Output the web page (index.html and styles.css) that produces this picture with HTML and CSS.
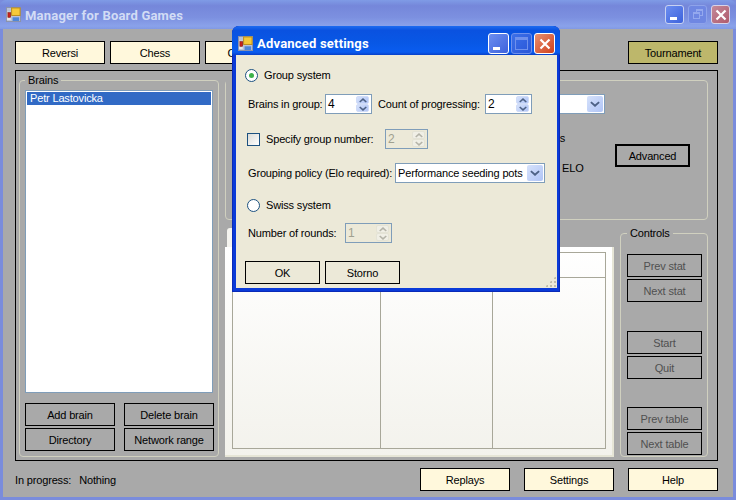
FILE: index.html
```html
<!DOCTYPE html>
<html lang="en">

<head>
    <meta charset="UTF-8">
    <meta name="viewport" content="width=device-width, initial-scale=1.0">
    <title>Manager for Board Games</title>
    <link rel="stylesheet" href="styles.css">
</head>

<body>

    <svg class="defs" width="0" height="0">
        <symbol id="app-icon" viewBox="0 0 16 16">
            <rect x="0.5" y="0.5" width="15" height="15" fill="#b9c2d8" stroke="#8c93a8"/>
            <rect x="1" y="5" width="4" height="9" fill="#e8e8e8"/>
            <rect x="2" y="6" width="3" height="5" fill="#c8221c" stroke="#7a1010" stroke-width="0.6"/>
            <rect x="6" y="1" width="9" height="8" fill="#f6c93a" stroke="#b98a18"/>
            <rect x="7" y="11" width="7" height="4" fill="#4f86d8"/>
        </symbol>
        <symbol id="arrow-up" viewBox="0 0 9 5">
            <path d="M0.8 4.2 L4.5 0.9 L8.2 4.2" fill="none" stroke="currentColor" stroke-width="1.7"/>
        </symbol>
        <symbol id="arrow-down" viewBox="0 0 9 5">
            <path d="M0.8 0.8 L4.5 4.1 L8.2 0.8" fill="none" stroke="currentColor" stroke-width="1.7"/>
        </symbol>
        <symbol id="close-x" viewBox="0 0 12 12">
            <path d="M1.5 1.5 L10.5 10.5 M10.5 1.5 L1.5 10.5" fill="none" stroke="#fff" stroke-width="2.2"/>
        </symbol>
    </svg>

    <div class="window">
        <div class="titlebar">
            <svg class="app-icon"><use href="#app-icon"/></svg>
            <span class="title-text">Manager for Board Games</span>
            <div class="caption-btns">
                <div class="caption-btn"><span class="min-bar"></span></div>
                <div class="caption-btn faded"><span class="restore-back"></span><span class="restore-front"></span></div>
                <div class="caption-btn close"><svg class="close-x"><use href="#close-x"/></svg></div>
            </div>
        </div>

        <div class="content">
            <div class="game-row">
                <div class="games">
                    <button class="btn cream">Reversi</button>
                    <button class="btn cream">Chess</button>
                    <button class="btn cream">Checkers</button>
                </div>
                <button class="btn khaki">Tournament</button>
            </div>

            <div class="frame">
                <fieldset class="group brains">
                    <legend>Brains</legend>
                    <div class="listbox">
                        <div class="list-item">Petr Lastovicka</div>
                    </div>
                    <div class="brain-btns">
                        <button class="btn">Add brain</button>
                        <button class="btn">Delete brain</button>
                        <button class="btn">Directory</button>
                        <button class="btn">Network range</button>
                    </div>
                </fieldset>

                <div class="right-col">
                    <fieldset class="group tourney">
                        <legend>Tournament</legend>
                        <div class="tourney-combo">
                            <div class="combo wide-combo">
                                <span class="combo-text"></span>
                                <span class="combo-arrow"><svg class="arrow"><use href="#arrow-down"/></svg></span>
                            </div>
                        </div>
                        <div class="tourney-info">
                            <div class="info-text">
                                <span class="info-groups">Groups</span>
                                <span>ELO</span>
                            </div>
                            <button class="btn advanced">Advanced</button>
                        </div>
                    </fieldset>

                    <div class="lower-row">
                        <div class="tabs">
                            <div class="tab-strip"><div class="tab"></div></div>
                            <div class="tab-panel">
                                <div class="stats-table">
                                    <div class="stats-head"></div>
                                    <div class="stats-body">
                                        <div class="stats-col"></div>
                                        <div class="stats-col"></div>
                                        <div class="stats-col"></div>
                                    </div>
                                </div>
                            </div>
                        </div>

                        <fieldset class="group controls">
                            <legend>Controls</legend>
                            <div class="control-set">
                                <button class="btn muted">Prev stat</button>
                                <button class="btn muted">Next stat</button>
                            </div>
                            <div class="control-set">
                                <button class="btn muted">Start</button>
                                <button class="btn muted">Quit</button>
                            </div>
                            <div class="control-set">
                                <button class="btn muted">Prev table</button>
                                <button class="btn muted">Next table</button>
                            </div>
                        </fieldset>
                    </div>
                </div>
            </div>

            <div class="status-row">
                <div class="status">
                    <span class="status-label">In progress:</span>
                    <span>Nothing</span>
                </div>
                <div class="bottom-btns">
                    <button class="btn cream">Replays</button>
                    <button class="btn cream">Settings</button>
                    <button class="btn cream">Help</button>
                </div>
            </div>
        </div>
    </div>

    <div class="dialog">
        <div class="dialog-title">
            <svg class="app-icon"><use href="#app-icon"/></svg>
            <span class="dialog-title-text">Advanced settings</span>
            <div class="caption-btns dialog-caption">
                <div class="caption-btn solid"><span class="min-bar"></span></div>
                <div class="caption-btn solid disabled"><span class="max-box"></span></div>
                <div class="caption-btn solid close"><svg class="close-x"><use href="#close-x"/></svg></div>
            </div>
        </div>
        <div class="dialog-body">
            <div class="row radio-row first-row">
                <span class="radio checked"></span>
                <span>Group system</span>
            </div>
            <div class="row field-row brains-row">
                <span class="lbl lbl-brains">Brains in group:</span>
                <div class="spin">
                    <span class="spin-val">4</span>
                    <span class="spin-btns">
                        <span class="spin-btn"><svg class="arrow"><use href="#arrow-up"/></svg></span>
                        <span class="spin-btn"><svg class="arrow"><use href="#arrow-down"/></svg></span>
                    </span>
                </div>
                <span class="lbl lbl-count">Count of progressing:</span>
                <div class="spin">
                    <span class="spin-val">2</span>
                    <span class="spin-btns">
                        <span class="spin-btn"><svg class="arrow"><use href="#arrow-up"/></svg></span>
                        <span class="spin-btn"><svg class="arrow"><use href="#arrow-down"/></svg></span>
                    </span>
                </div>
            </div>
            <div class="row check-row">
                <span class="checkbox"></span>
                <span class="lbl lbl-specify">Specify group number:</span>
                <div class="spin off narrow">
                    <span class="spin-val">2</span>
                    <span class="spin-btns">
                        <span class="spin-btn"><svg class="arrow"><use href="#arrow-up"/></svg></span>
                        <span class="spin-btn"><svg class="arrow"><use href="#arrow-down"/></svg></span>
                    </span>
                </div>
            </div>
            <div class="row field-row policy-row">
                <span class="lbl lbl-policy">Grouping policy (Elo required):</span>
                <div class="combo policy-combo">
                    <span class="combo-text">Performance seeding pots</span>
                    <span class="combo-arrow"><svg class="arrow"><use href="#arrow-down"/></svg></span>
                </div>
            </div>
            <div class="row radio-row swiss-row">
                <span class="radio"></span>
                <span>Swiss system</span>
            </div>
            <div class="row field-row rounds-row">
                <span class="lbl lbl-rounds">Number of rounds:</span>
                <div class="spin off">
                    <span class="spin-val">1</span>
                    <span class="spin-btns">
                        <span class="spin-btn"><svg class="arrow"><use href="#arrow-up"/></svg></span>
                        <span class="spin-btn"><svg class="arrow"><use href="#arrow-down"/></svg></span>
                    </span>
                </div>
            </div>
            <div class="dialog-btns">
                <button class="btn dlg-btn">OK</button>
                <button class="btn dlg-btn">Storno</button>
            </div>
            <div class="grip"></div>
        </div>
    </div>

</body>

</html>
```

FILE: styles.css
```css
* {
    box-sizing: border-box;
}

body {
    margin: 0;
    width: 736px;
    height: 500px;
    overflow: hidden;
    position: relative;
    font-family: "Liberation Sans", Arial, sans-serif;
    font-size: 11px;
    letter-spacing: -0.16px;
    color: #000;
}

.defs {
    position: absolute;
}

/* Main window */
.window {
    width: 736px;
    height: 500px;
    display: flex;
    flex-direction: column;
    background-color: #7a8cdc;
}

.titlebar {
    height: 29px;
    display: flex;
    align-items: center;
    padding: 0 6px 0 6px;
    background: linear-gradient(to bottom, #7f9be6 0%, #7587da 20%, #7c90e0 60%, #8aa2ea 90%, #8199e4 100%);
    border-radius: 6px 6px 0 0;
}

.app-icon {
    width: 15px;
    height: 15px;
    flex: none;
}

.title-text {
    margin: 1px 0 0 4px;
    font-family: "Roboto", sans-serif;
    font-weight: 700;
    font-size: 13px;
    letter-spacing: 0.2px;
    color: #d2dcf5;
}

.caption-btns {
    margin-left: auto;
    display: flex;
    gap: 4px;
}

.caption-btn {
    width: 19px;
    height: 19px;
    border: 1px solid #c8d2f2;
    border-radius: 3px;
    background: linear-gradient(135deg, #6c8ef0, #3d62dc);
    position: relative;
}

.caption-btn.faded {
    background: #6f87e2;
    border-color: #8ea3ea;
}

.caption-btn.close {
    background: linear-gradient(135deg, #c48a9a, #b05a6c);
    border-color: #d8d4e8;
}

.min-bar {
    position: absolute;
    left: 4px;
    bottom: 3px;
    width: 7px;
    height: 3px;
    background-color: #fff;
}

.restore-back,
.restore-front {
    position: absolute;
    width: 7px;
    height: 7px;
    border: 1px solid #94a8ee;
    border-top-width: 2px;
}

.restore-back {
    left: 7px;
    top: 3px;
}

.restore-front {
    left: 4px;
    top: 6px;
    background-color: #6f87e2;
}

.close-x {
    position: absolute;
    left: 3px;
    top: 3px;
    width: 12px;
    height: 12px;
}

.content {
    flex: 1;
    margin: 0 3px 3px 3px;
    padding: 12px 15px 6px 12px;
    background-color: #a9a9a9;
    display: flex;
    flex-direction: column;
}

/* Buttons */
.btn {
    font-family: inherit;
    font-size: 11px;
    letter-spacing: inherit;
    color: #000;
    width: 90px;
    height: 23px;
    padding: 0;
    border: 1px solid #000;
    border-radius: 0;
    background-color: #a9a9a9;
}

.cream {
    background-color: #fff8dc;
}

.khaki {
    background-color: #bdb76b;
}

.muted {
    width: 75px;
    color: #505050;
}

.game-row {
    display: flex;
    justify-content: space-between;
    height: 23px;
}

.games {
    display: flex;
    gap: 5px;
}

/* Black frame */
.frame {
    height: 391px;
    margin-top: 6px;
    border: 1px solid #000;
    padding: 2px 9px 3px 3px;
    display: flex;
    gap: 6px;
}

.group {
    margin: 0;
    min-width: 0;
    border: 1px solid #d0d0bf;
    border-radius: 4px;
}

.group legend {
    margin-left: 0;
    padding: 0 3px;
    line-height: 14px;
}

.brains {
    width: 200px;
    padding: 3px 5px 0 5px;
}

.listbox {
    height: 303px;
    border: 1px solid #7f9db9;
    background-color: #fff;
    padding: 1px;
}

.list-item {
    height: 13px;
    line-height: 13px;
    padding-left: 3px;
    background-color: #316ac5;
    color: #fff;
}

.brain-btns {
    margin-top: 10px;
    display: grid;
    grid-template-columns: 90px 90px;
    column-gap: 9px;
    row-gap: 2px;
}

.right-col {
    flex: 1;
    display: flex;
    flex-direction: column;
}

.tourney {
    height: 147px;
    padding: 0;
}

.tourney legend {
    visibility: hidden;
}

.tourney-combo {
    display: flex;
    justify-content: flex-end;
    margin-top: 7px;
    padding-right: 102px;
}

.wide-combo {
    width: 150px;
}

.tourney-info {
    display: flex;
    justify-content: flex-end;
    padding-right: 17px;
    margin-top: 30px;
}

.info-text {
    width: 20px;
    display: flex;
    flex-direction: column;
    gap: 18px;
    margin: -12px 33px 0 0;
}

.info-groups {
    margin-left: -32px;
}

.advanced {
    width: 75px;
    border-width: 2px;
}

.lower-row {
    margin-top: 8px;
    display: flex;
    gap: 6px;
    height: 229px;
}

.tabs {
    width: 389px;
    display: flex;
    flex-direction: column;
}

.tab-strip {
    height: 19px;
    padding-left: 2px;
}

.tab {
    width: 70px;
    height: 19px;
    background-color: #f5f4ef;
    border-radius: 3px 3px 0 0;
}

.tab-panel {
    height: 210px;
    padding: 5px 6px 6px 7px;
    background: linear-gradient(to bottom, #fff, #f3f2ec);
    border-right: 2px solid #e6e5d6;
    border-bottom: 2px solid #e6e5d6;
}

.stats-table {
    height: 100%;
    border: 1px solid #a8a799;
    display: flex;
    flex-direction: column;
}

.stats-head {
    height: 25px;
    border-bottom: 1px solid #a8a799;
}

.stats-body {
    flex: 1;
    display: grid;
    grid-template-columns: 148px 112px 1fr;
}

.stats-col {
    border-right: 1px solid #a8a799;
}

.stats-col:last-child {
    border-right: none;
}

.controls {
    width: 88px;
    height: 231px;
    margin-top: -2px;
    padding: 14px 5px 0 6px;
}

.control-set {
    display: flex;
    flex-direction: column;
    gap: 2px;
    margin-bottom: 29px;
}

.control-set:nth-child(3) {
    margin-bottom: 28px;
}

/* Bottom row */
.status-row {
    margin-top: 7px;
    display: flex;
    align-items: center;
    justify-content: space-between;
    height: 23px;
}

.status {
    display: flex;
    gap: 8px;
}

.bottom-btns {
    display: flex;
    gap: 14px;
}

/* Dialog */
.dialog {
    position: absolute;
    left: 232px;
    top: 26px;
    width: 328px;
    height: 266px;
    display: flex;
    flex-direction: column;
    background-color: #0a3ad8;
    border-radius: 7px 7px 0 0;
    box-shadow: inset 0 0 0 1px #0a2ab8;
}

.dialog-title {
    height: 29px;
    flex: none;
    display: flex;
    align-items: center;
    padding: 5px 5px 0 6px;
    background: linear-gradient(to bottom, #1e6cf0 0%, #0a52e0 15%, #0858e6 60%, #0a5cf0 90%, #0840c8 100%);
    border-radius: 7px 7px 0 0;
}

.dialog-title-text {
    margin-left: 4px;
    font-family: "Roboto", sans-serif;
    font-weight: 700;
    font-size: 13px;
    letter-spacing: 0.2px;
    color: #fff;
}

.dialog-caption {
    gap: 2px;
}

.caption-btn.solid {
    width: 21px;
    height: 21px;
    border-color: #fff;
}

.caption-btn.solid.disabled {
    background: linear-gradient(135deg, #3d70e8, #2a56d8);
    border-color: #6f90ec;
}

.caption-btn.solid.close {
    background: linear-gradient(135deg, #e89070, #d0401c);
}

.caption-btn.solid .close-x {
    left: 4px;
    top: 4px;
}

.max-box {
    position: absolute;
    left: 3px;
    top: 3px;
    width: 13px;
    height: 13px;
    border: 1px solid #6f90ec;
    border-top-width: 3px;
}

.dialog-body {
    flex: 1;
    margin: 0 3px 4px 4px;
    background-color: #ece9d8;
    position: relative;
    padding-bottom: 4px;
}

.row {
    display: flex;
    align-items: center;
    white-space: nowrap;
}

.radio-row {
    height: 18px;
    gap: 6px;
}

.first-row {
    margin-top: 11px;
    padding-left: 9px;
}

.swiss-row {
    margin-top: 13px;
    padding-left: 11px;
}

.field-row {
    height: 20px;
    padding-left: 12px;
}

.brains-row {
    margin-top: 10px;
}

.lbl-brains {
    width: 77px;
}

.lbl-count {
    width: 107px;
    margin-left: 6px;
}

.radio {
    width: 13px;
    height: 13px;
    border: 1px solid #1c5180;
    border-radius: 50%;
    background-color: #fff;
    position: relative;
}

.radio.checked::after {
    content: "";
    position: absolute;
    left: 3px;
    top: 3px;
    width: 5px;
    height: 5px;
    border-radius: 50%;
    background-color: #3cb24a;
}

.check-row {
    height: 20px;
    margin-top: 15px;
    padding-left: 11px;
}

.checkbox {
    width: 13px;
    height: 13px;
    border: 1px solid #1c5180;
    background: linear-gradient(135deg, #dcdcd7, #fff);
}

.lbl-specify {
    width: 119px;
    margin-left: 6px;
}

.policy-row {
    margin-top: 14px;
}

.lbl-policy {
    width: 147px;
}

.rounds-row {
    margin-top: 9px;
}

.lbl-rounds {
    width: 97px;
}

/* Inputs */
.spin {
    width: 47px;
    height: 20px;
    border: 1px solid #7f9db9;
    background-color: #fff;
    display: flex;
    align-items: center;
    justify-content: space-between;
    padding: 0 2px 0 2px;
}

.spin.narrow {
    width: 43px;
}

.spin-val {
    font-size: 12px;
}

.spin-btns {
    width: 13px;
    height: 16px;
    display: flex;
    flex-direction: column;
}

.spin-btn {
    flex: 1;
    display: flex;
    align-items: center;
    justify-content: center;
    color: #4d6185;
    background: linear-gradient(135deg, #d6e2fb, #b0c4f6);
    border: 1px solid #d0dcf8;
    border-radius: 2px;
}

.arrow {
    width: 8px;
    height: 5px;
}

.spin.off {
    background-color: #ece9d8;
}

.spin.off .spin-val {
    color: #a0a08f;
}

.spin.off .spin-btn {
    color: #b4b3a8;
    background: #f0efe6;
    border-color: #e4e3d6;
}

.combo {
    height: 20px;
    border: 1px solid #7f9db9;
    background-color: #fff;
    display: flex;
    align-items: center;
    justify-content: space-between;
    padding: 1px;
}

.policy-combo {
    width: 150px;
}

.combo-text {
    padding-left: 1px;
    white-space: nowrap;
}

.combo-arrow {
    width: 16px;
    height: 16px;
    flex: none;
    display: flex;
    align-items: center;
    justify-content: center;
    color: #4d6185;
    background: linear-gradient(135deg, #d6e2fb, #b0c4f6);
    border-radius: 2px;
}

.combo-arrow .arrow {
    width: 10px;
    height: 6px;
}

.dialog-btns {
    margin-top: 18px;
    padding-left: 9px;
    display: flex;
    gap: 5px;
}

.dlg-btn {
    width: 75px;
    background-color: #ece9d8;
}

.grip {
    position: absolute;
    right: 1px;
    bottom: 1px;
    width: 11px;
    height: 11px;
    background-image: radial-gradient(circle, #c0bdaa 1px, transparent 1.2px);
    background-size: 4px 4px;
    clip-path: polygon(100% 0, 100% 100%, 0 100%);
}
```
